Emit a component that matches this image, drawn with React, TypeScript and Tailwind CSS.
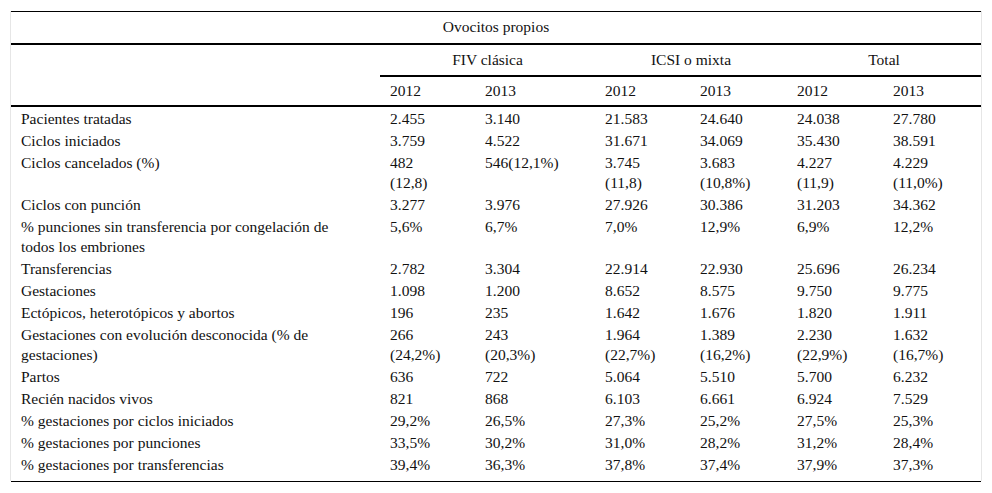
const rows: { label: string[]; cells: string[][] }[] = [
  { label: ['Pacientes tratadas'], cells: [['2.455'], ['3.140'], ['21.583'], ['24.640'], ['24.038'], ['27.780']] },
  { label: ['Ciclos iniciados'], cells: [['3.759'], ['4.522'], ['31.671'], ['34.069'], ['35.430'], ['38.591']] },
  {
    label: ['Ciclos cancelados (%)'],
    cells: [['482', '(12,8)'], ['546(12,1%)'], ['3.745', '(11,8)'], ['3.683', '(10,8%)'], ['4.227', '(11,9)'], ['4.229', '(11,0%)']],
  },
  { label: ['Ciclos con punción'], cells: [['3.277'], ['3.976'], ['27.926'], ['30.386'], ['31.203'], ['34.362']] },
  {
    label: ['% punciones sin transferencia por congelación de', 'todos los embriones'],
    cells: [['5,6%'], ['6,7%'], ['7,0%'], ['12,9%'], ['6,9%'], ['12,2%']],
  },
  { label: ['Transferencias'], cells: [['2.782'], ['3.304'], ['22.914'], ['22.930'], ['25.696'], ['26.234']] },
  { label: ['Gestaciones'], cells: [['1.098'], ['1.200'], ['8.652'], ['8.575'], ['9.750'], ['9.775']] },
  { label: ['Ectópicos, heterotópicos y abortos'], cells: [['196'], ['235'], ['1.642'], ['1.676'], ['1.820'], ['1.911']] },
  {
    label: ['Gestaciones con evolución desconocida (% de', 'gestaciones)'],
    cells: [['266', '(24,2%)'], ['243', '(20,3%)'], ['1.964', '(22,7%)'], ['1.389', '(16,2%)'], ['2.230', '(22,9%)'], ['1.632', '(16,7%)']],
  },
  { label: ['Partos'], cells: [['636'], ['722'], ['5.064'], ['5.510'], ['5.700'], ['6.232']] },
  { label: ['Recién nacidos vivos'], cells: [['821'], ['868'], ['6.103'], ['6.661'], ['6.924'], ['7.529']] },
  { label: ['% gestaciones por ciclos iniciados'], cells: [['29,2%'], ['26,5%'], ['27,3%'], ['25,2%'], ['27,5%'], ['25,3%']] },
  { label: ['% gestaciones por punciones'], cells: [['33,5%'], ['30,2%'], ['31,0%'], ['28,2%'], ['31,2%'], ['28,4%']] },
  { label: ['% gestaciones por transferencias'], cells: [['39,4%'], ['36,3%'], ['37,8%'], ['37,4%'], ['37,9%'], ['37,3%']] },
];

function Lines({ parts }: { parts: string[] }) {
  return (
    <>
      {parts.map((p, i) => (
        <span key={i} className="block whitespace-nowrap">
          {p}
        </span>
      ))}
    </>
  );
}

export default function App() {
  return (
    <div className="min-h-[493px] bg-white pt-[11px] font-['Liberation_Serif','Times_New_Roman',serif] text-[15.5px] text-[#111]">
      <div className="ml-[10px] w-[972px] border-x border-[#e6e6e6] pb-[5px]">
        <table className="w-[970px] table-fixed border-collapse leading-[20px]">
          <colgroup>
            <col className="w-[369px]" />
            <col className="w-[95px]" />
            <col className="w-[120px]" />
            <col className="w-[95px]" />
            <col className="w-[97px]" />
            <col className="w-[96px]" />
            <col className="w-[98px]" />
          </colgroup>
          <thead>
            <tr className="h-[32px] border-t border-b-2 border-black">
              <th colSpan={7} className="p-0 text-center font-normal">
                Ovocitos propios
              </th>
            </tr>
            <tr className="h-[32px]">
              <th className="p-0" />
              <th colSpan={2} className="border-b-2 border-black p-0 text-center font-normal">
                FIV clásica
              </th>
              <th colSpan={2} className="border-b-2 border-black p-0 text-center font-normal">
                ICSI o mixta
              </th>
              <th colSpan={2} className="border-b-2 border-black p-0 text-center font-normal">
                Total
              </th>
            </tr>
            <tr className="h-[30px] border-b-2 border-black">
              <th className="p-0" />
              {['2012', '2013', '2012', '2013', '2012', '2013'].map((y, i) => (
                <th key={i} className="p-0 pl-[10px] text-left font-normal">
                  {y}
                </th>
              ))}
            </tr>
          </thead>
          <tbody>
            {rows.map((r, i) => (
              <tr key={i}>
                <td className={`pl-[10px] pb-[1px] align-top ${i === 0 ? 'pt-[2px]' : 'pt-[1px]'}`}>
                  <Lines parts={r.label} />
                </td>
                {r.cells.map((c, j) => (
                  <td key={j} className={`pl-[10px] pb-[1px] align-top ${i === 0 ? 'pt-[2px]' : 'pt-[1px]'}`}>
                    <Lines parts={c} />
                  </td>
                ))}
              </tr>
            ))}
          </tbody>
        </table>
      </div>
      <div className="ml-[11px] w-[970px] border-t border-black" />
    </div>
  );
}
